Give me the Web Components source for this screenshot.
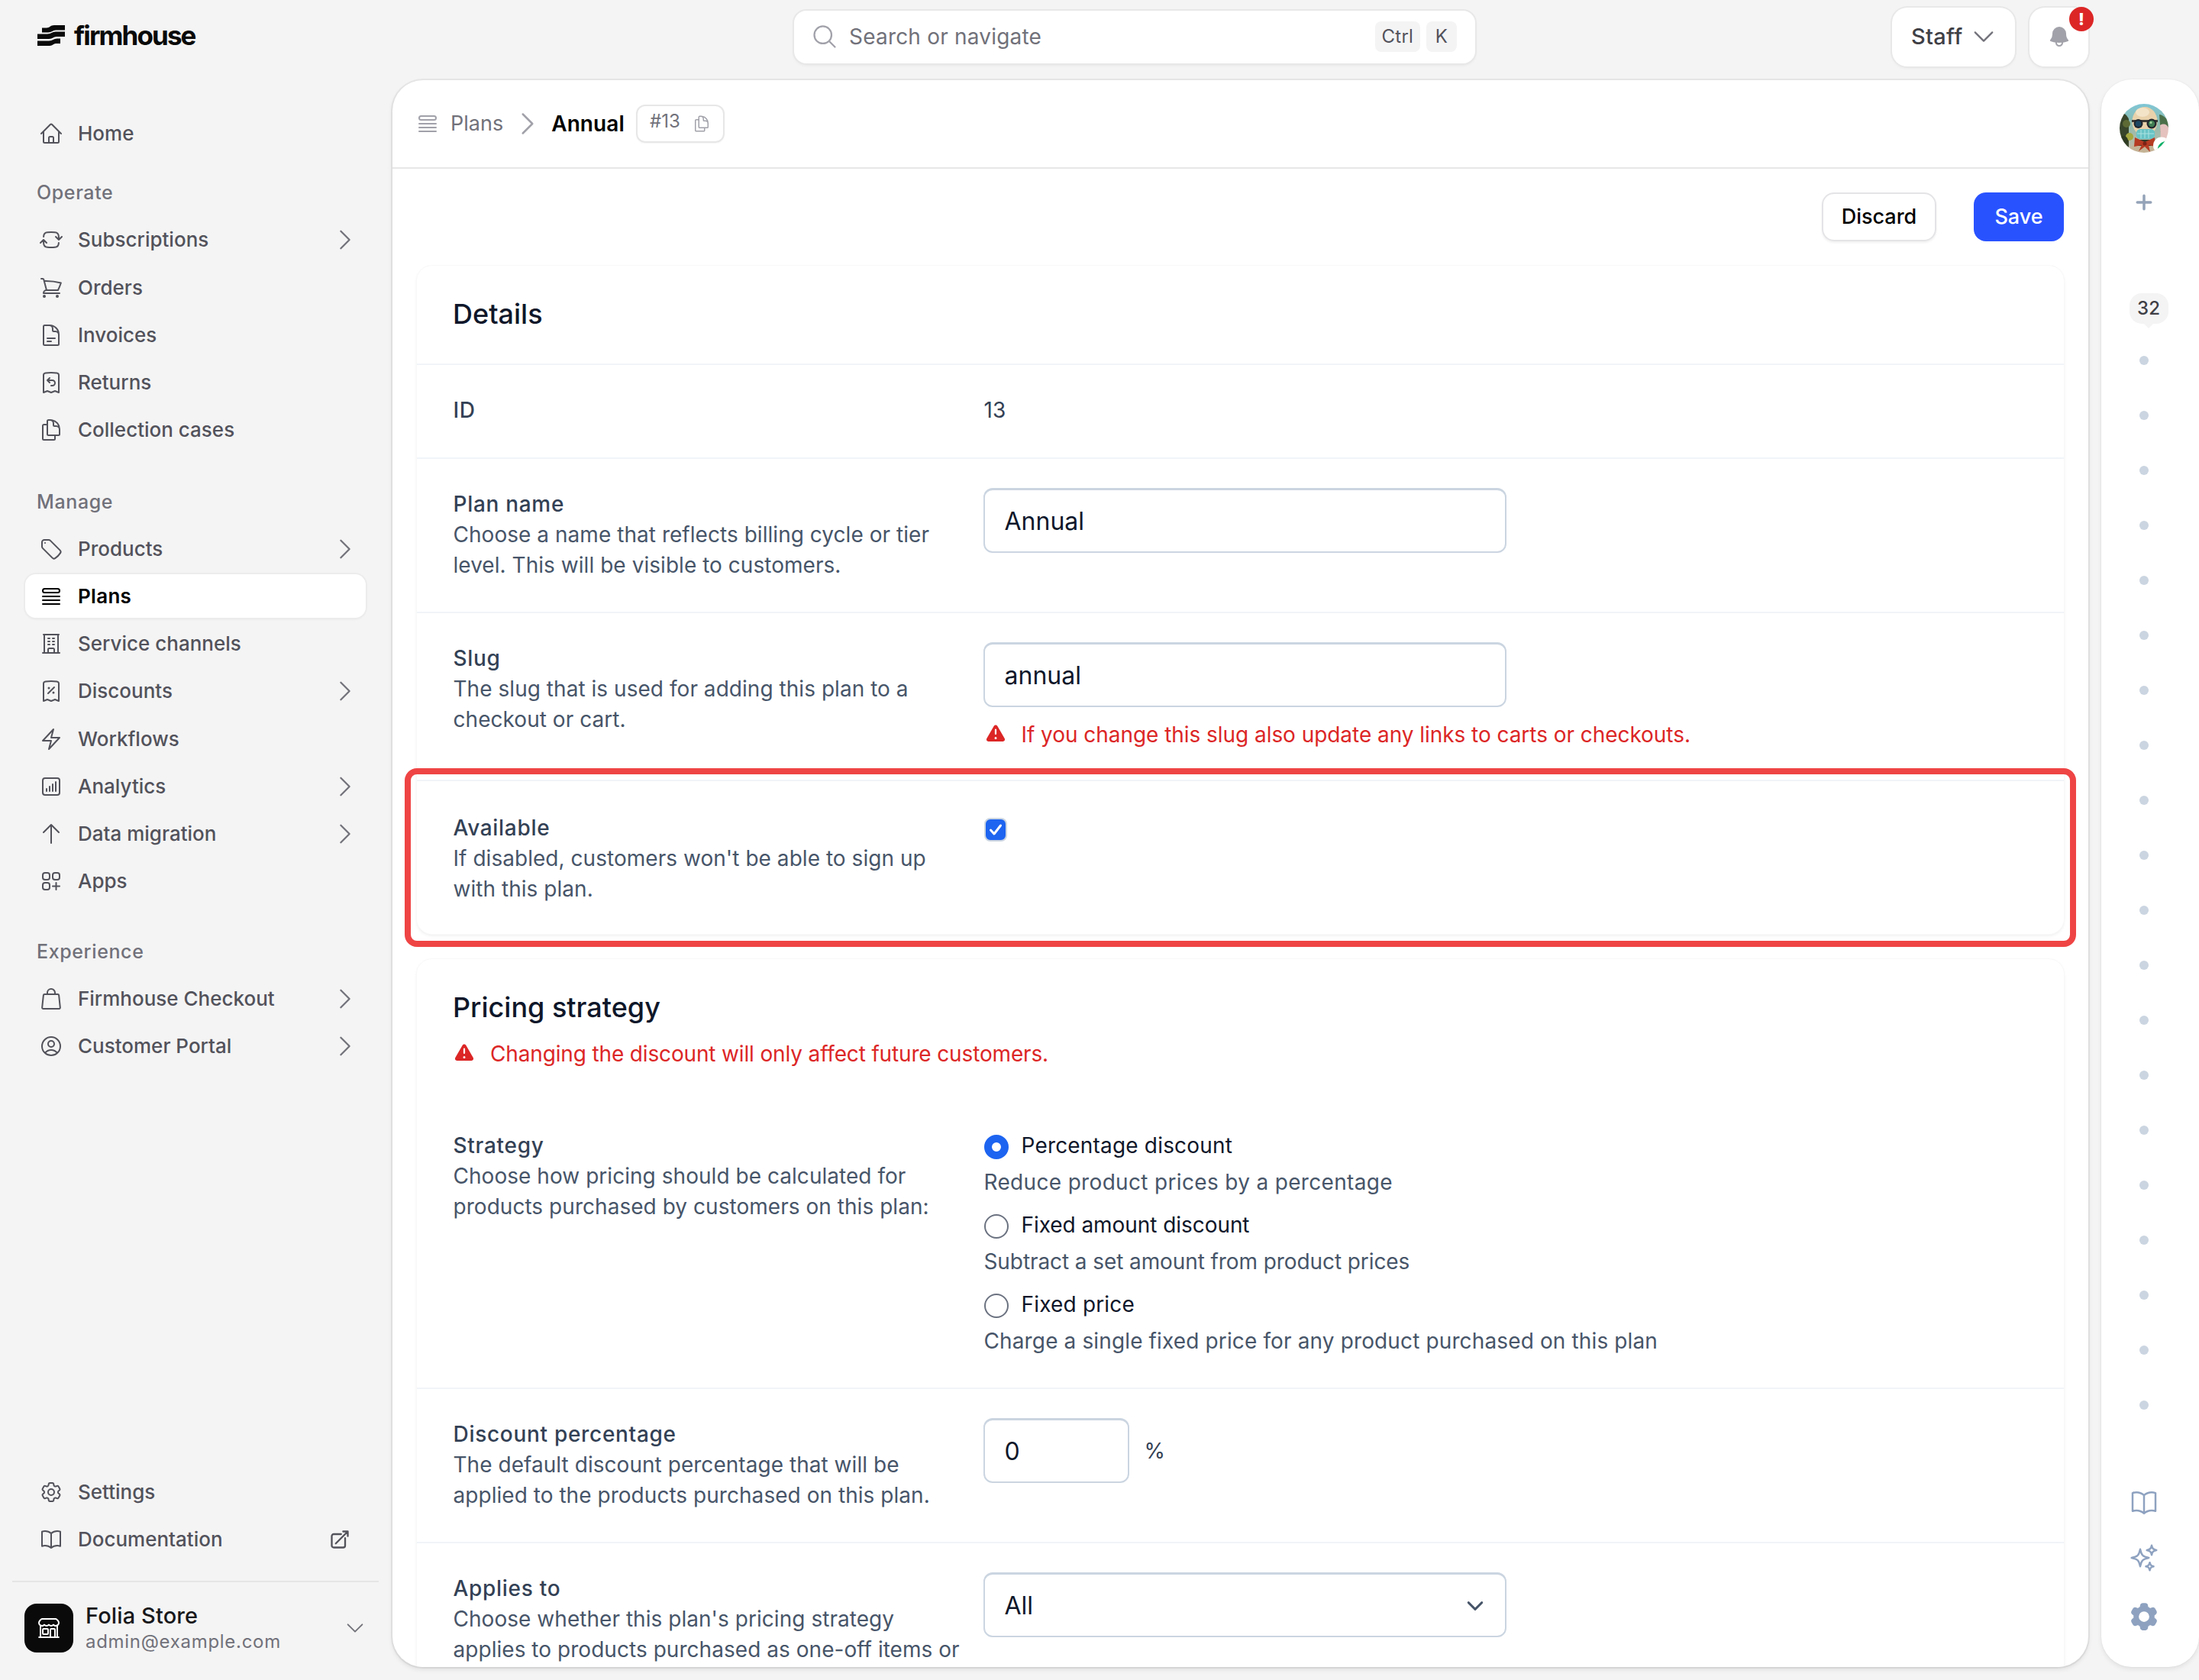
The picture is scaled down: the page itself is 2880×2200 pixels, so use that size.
<!DOCTYPE html>
<html lang="en">
<head>
<meta charset="utf-8">
<title>Firmhouse – Plans</title>
<style>
html,body{margin:0;padding:0;background:#f4f4f4;font-family:Inter,"Noto Sans","Liberation Sans",sans-serif;width:2880px;height:2200px;overflow:hidden}
</style>
</head>
<body>
<fh-app>
  <fh-sidebar slot="sidebar"></fh-sidebar>
  <fh-topbar slot="topbar"></fh-topbar>
  <fh-panel slot="panel">
    <fh-breadcrumb slot="head"></fh-breadcrumb>
    <fh-actions></fh-actions>
    <fh-card heading="Details">
      <fh-row label="ID" tight><fh-value>13</fh-value></fh-row>
      <fh-row label="Plan name" desc="Choose a name that reflects billing cycle or tier level. This will be visible to customers."><fh-input value="Annual"></fh-input></fh-row>
      <fh-row label="Slug" desc="The slug that is used for adding this plan to a checkout or cart." compact>
        <fh-input value="annual"></fh-input>
        <fh-warning style="margin-top:16px;letter-spacing:-.05px">If you change this slug also update any links to carts or checkouts.</fh-warning>
      </fh-row>
      <fh-row label="Available" desc="If disabled, customers won't be able to sign up with this plan." highlighted><fh-check></fh-check></fh-row>
    </fh-card>
    <fh-card heading="Pricing strategy" open-head style="margin-top:33px">
      <fh-warning slot="note" style="letter-spacing:-.15px">Changing the discount will only affect future customers.</fh-warning>
      <fh-row label="Strategy" desc="Choose how pricing should be calculated for products purchased by customers on this plan:" borderless>
        <fh-radio checked label="Percentage discount" sub="Reduce product prices by a percentage" style="--sub:.33px"></fh-radio>
        <fh-radio label="Fixed amount discount" sub="Subtract a set amount from product prices" style="--lab:-.06px;--sub:-.09px"></fh-radio>
        <fh-radio label="Fixed price" sub="Charge a single fixed price for any product purchased on this plan" style="--sub:.13px"></fh-radio>
      </fh-row>
      <fh-row label="Discount percentage" desc="The default discount percentage that will be applied to the products purchased on this plan."><fh-input value="0" short suffix="%"></fh-input></fh-row>
      <fh-row label="Applies to" desc="Choose whether this plan's pricing strategy applies to products purchased as one-off items or"><fh-input value="All" select></fh-input></fh-row>
    </fh-card>
  </fh-panel>
  <fh-rail slot="rail"></fh-rail>
</fh-app>
<script>
const P={
home:'M2.25 12l8.954-8.955c.44-.439 1.152-.439 1.591 0L21.75 12M4.5 9.75v10.125c0 .621.504 1.125 1.125 1.125H9.75v-4.875c0-.621.504-1.125 1.125-1.125h2.25c.621 0 1.125.504 1.125 1.125V21h4.125c.621 0 1.125-.504 1.125-1.125V9.75M8.25 21h8.25',
sync:'M19.5 12c0-1.232-.046-2.453-.138-3.662a4.006 4.006 0 00-3.7-3.7 48.678 48.678 0 00-7.324 0 4.006 4.006 0 00-3.7 3.7c-.017.22-.032.441-.046.662M19.5 12l3-3m-3 3l-3-3m-12 3c0 1.232.046 2.453.138 3.662a4.006 4.006 0 003.7 3.7 48.656 48.656 0 007.324 0 4.006 4.006 0 003.7-3.7c.017-.22.032-.441.046-.662M4.5 12l3 3m-3-3l-3 3',
cart:'M2.25 3h1.386c.51 0 .955.343 1.087.835l.383 1.437M7.5 14.25a3 3 0 00-3 3h15.75m-12.75-3h11.218c1.121-2.3 2.1-4.684 2.924-7.138a60.114 60.114 0 00-16.536-1.84M7.5 14.25L5.106 5.272M6 20.25a.75.75 0 11-1.5 0 .75.75 0 011.5 0zm12.75 0a.75.75 0 11-1.5 0 .75.75 0 011.5 0z',
doc:'M19.5 14.25v-2.625a3.375 3.375 0 00-3.375-3.375h-1.5A1.125 1.125 0 0113.5 7.125v-1.5a3.375 3.375 0 00-3.375-3.375H8.25m0 12.75h7.5m-7.5 3H12M10.5 2.25H5.625c-.621 0-1.125.504-1.125 1.125v17.25c0 .621.504 1.125 1.125 1.125h12.75c.621 0 1.125-.504 1.125-1.125V11.25a9 9 0 00-9-9z',
refund:'M8.25 9.75h4.875a2.625 2.625 0 010 5.25H12M8.25 9.75L10.5 7.5M8.25 9.75L10.5 12m9-7.243V21.75l-3.75-1.5-3.75 1.5-3.75-1.5-3.75 1.5V4.757c0-1.108.806-2.057 1.907-2.185a48.507 48.507 0 0111.186 0c1.1.128 1.907 1.077 1.907 2.185z',
dup:'M15.75 17.25v3.375c0 .621-.504 1.125-1.125 1.125h-9.75a1.125 1.125 0 01-1.125-1.125V7.875c0-.621.504-1.125 1.125-1.125H6.75a9.06 9.06 0 011.5.124m7.5 10.376h3.375c.621 0 1.125-.504 1.125-1.125V11.25c0-4.46-3.243-8.161-7.5-8.876a9.06 9.06 0 00-1.5-.124H9.375c-.621 0-1.125.504-1.125 1.125v3.5m7.5 10.375H9.375a1.125 1.125 0 01-1.125-1.125v-9.25m12 6.625v-1.875a3.375 3.375 0 00-3.375-3.375h-1.5a1.125 1.125 0 01-1.125-1.125v-1.5a3.375 3.375 0 00-3.375-3.375H9.75',
tag:'M9.568 3H5.25A2.25 2.25 0 003 5.25v4.318c0 .597.237 1.17.659 1.591l9.581 9.581c.699.699 1.78.872 2.607.33a18.095 18.095 0 005.223-5.223c.542-.827.369-1.908-.33-2.607L11.16 3.66A2.25 2.25 0 009.568 3zM6 6h.008v.008H6V6z',
queue:'M3.75 12h16.5m-16.5 3.75h16.5m-16.5 3.75h16.5M5.625 4.5h12.75a1.875 1.875 0 010 3.75H5.625a1.875 1.875 0 010-3.75z',
office:'M3.75 21h16.5M4.5 3h15M5.25 3v18m13.5-18v18M9 6.75h1.5m-1.5 3h1.5m-1.5 3h1.5m3-6H15m-1.5 3H15m-1.5 3H15M9 21v-3.375c0-.621.504-1.125 1.125-1.125h3.75c.621 0 1.125.504 1.125 1.125V21',
percent:'M9 14.25l6-6m4.5-3.493V21.75l-3.75-1.5-3.75 1.5-3.75-1.5-3.75 1.5V4.757c0-1.108.806-2.057 1.907-2.185a48.507 48.507 0 0111.186 0c1.1.128 1.907 1.077 1.907 2.185zM9.75 9h.008v.008H9.75V9zm.375 0a.375.375 0 11-.75 0 .375.375 0 01.75 0zm4.125 4.5h.008v.008h-.008V13.5zm.375 0a.375.375 0 11-.75 0 .375.375 0 01.75 0z',
bolt:'M3.75 13.5l10.5-11.25L12 10.5h8.25L9.75 21.75 12 13.5H3.75z',
chart:'M7.5 14.25v2.25m3-4.5v4.5m3-6.75v6.75m3-9v9M6 20.25h12A2.25 2.25 0 0020.25 18V6A2.25 2.25 0 0018 3.75H6A2.25 2.25 0 003.75 6v12A2.25 2.25 0 006 20.25z',
up:'M4.5 10.5L12 3m0 0l7.5 7.5M12 3v18',
apps:'M13.5 16.875h3.375m0 0h3.375m-3.375 0V13.5m0 6.75v-3.375M6 10.5h2.25a2.25 2.25 0 002.25-2.25V6a2.25 2.25 0 00-2.25-2.25H6A2.25 2.25 0 003.75 6v2.25A2.25 2.25 0 006 10.5zm0 9.75h2.25A2.25 2.25 0 0010.5 18v-2.25a2.25 2.25 0 00-2.25-2.25H6a2.25 2.25 0 00-2.25 2.25V18A2.25 2.25 0 006 20.25zm9.75-9.75H18a2.25 2.25 0 002.25-2.25V6A2.25 2.25 0 0018 3.75h-2.25A2.25 2.25 0 0013.5 6v2.25a2.25 2.25 0 002.25 2.25z',
bag:'M8.25 7.5V6a3.75 3.75 0 117.5 0v1.5m3.856 1.007l1.263 12c.07.665-.45 1.243-1.119 1.243H4.25a1.125 1.125 0 01-1.12-1.243l1.264-12A1.125 1.125 0 015.513 7.5h12.974c.576 0 1.059.435 1.119 1.007z',
user:'M17.982 18.725A7.488 7.488 0 0012 15.75a7.488 7.488 0 00-5.982 2.975m11.963 0a9 9 0 10-11.963 0m11.963 0A8.966 8.966 0 0112 21a8.966 8.966 0 01-5.982-2.275M15 9.75a3 3 0 11-6 0 3 3 0 016 0z',
cog:'M9.594 3.94c.09-.542.56-.94 1.11-.94h2.593c.55 0 1.02.398 1.11.94l.213 1.281c.063.374.313.686.645.87.074.04.147.083.22.127.324.196.72.257 1.075.124l1.217-.456a1.125 1.125 0 011.37.49l1.296 2.247a1.125 1.125 0 01-.26 1.431l-1.003.827c-.293.24-.438.613-.431.992a6.759 6.759 0 010 .255c-.007.378.138.75.43.99l1.005.828c.424.35.534.954.26 1.43l-1.298 2.247a1.125 1.125 0 01-1.369.491l-1.217-.456c-.355-.133-.75-.072-1.076.124a6.57 6.57 0 01-.22.128c-.331.183-.581.495-.644.869l-.213 1.28c-.09.543-.56.941-1.11.941h-2.594c-.55 0-1.02-.398-1.11-.94l-.213-1.281c-.062-.374-.312-.686-.644-.87a6.52 6.52 0 01-.22-.127c-.325-.196-.72-.257-1.076-.124l-1.217.456a1.125 1.125 0 01-1.369-.49l-1.297-2.247a1.125 1.125 0 01.26-1.431l1.004-.827c.292-.24.437-.613.43-.992a6.932 6.932 0 010-.255c.007-.378-.138-.75-.43-.99l-1.004-.828a1.125 1.125 0 01-.26-1.43l1.297-2.247a1.125 1.125 0 011.37-.491l1.216.456c.356.133.751.072 1.076-.124.072-.044.146-.087.22-.128.332-.183.582-.495.644-.869l.214-1.281zM15 12a3 3 0 11-6 0 3 3 0 016 0z',
book:'M12 6.042A8.967 8.967 0 006 3.75c-1.052 0-2.062.18-3 .512v14.25A8.987 8.987 0 016 18c2.305 0 4.408.867 6 2.292m0-14.25a8.966 8.966 0 016-2.292c1.052 0 2.062.18 3 .512v14.25A8.987 8.987 0 0018 18a8.967 8.967 0 00-6 2.292m0-14.25v14.25',
ext:'M13.5 6H5.25A2.25 2.25 0 003 8.25v10.5A2.25 2.25 0 005.25 21h10.5A2.25 2.25 0 0018 18.75V10.5m-10.5 6L21 3m0 0h-5.25M21 3v5.25',
right:'M8.25 4.5l7.5 7.5-7.5 7.5',
down:'M19.5 8.25l-7.5 7.5-7.5-7.5',
search:'M21 21l-5.197-5.197m0 0A7.5 7.5 0 105.196 5.196a7.5 7.5 0 0010.607 10.607z',
plus:'M12 4.5v15m7.5-7.5h-15',
store:'M13.5 21v-7.5a.75.75 0 01.75-.75h3a.75.75 0 01.75.75V21m-4.5 0H2.36m11.14 0H18m0 0h3.64m-1.39 0V9.349m-16.5 11.65V9.35m0 0a3.001 3.001 0 003.75-.615A2.993 2.993 0 009.75 9.75c.896 0 1.7-.393 2.25-1.016a2.993 2.993 0 002.25 1.016c.896 0 1.7-.393 2.25-1.016a3.001 3.001 0 003.75.614m-16.5 0a3.004 3.004 0 01-.621-4.72L4.318 3.44A1.5 1.5 0 015.378 3h13.243a1.5 1.5 0 011.06.44l1.19 1.189a3 3 0 01-.621 4.72m-13.5 8.65h3.75a.75.75 0 00.75-.75V13.5a.75.75 0 00-.75-.75H6.75a.75.75 0 00-.75.75v3.75c0 .415.336.75.75.75z',
sparkles:'M9.813 15.904L9 18.75l-.813-2.846a4.5 4.5 0 00-3.09-3.09L2.25 12l2.846-.813a4.5 4.5 0 003.09-3.09L9 5.25l.813 2.846a4.5 4.5 0 003.09 3.09L15.75 12l-2.846.813a4.5 4.5 0 00-3.09 3.09zM18.259 8.715L18 9.75l-.259-1.035a3.375 3.375 0 00-2.455-2.456L14.25 6l1.036-.259a3.375 3.375 0 002.455-2.456L18 2.25l.259 1.035a3.375 3.375 0 002.456 2.456L21.75 6l-1.035.259a3.375 3.375 0 00-2.456 2.456zM16.894 20.567L16.5 21.75l-.394-1.183a2.25 2.25 0 00-1.423-1.423L13.5 18.75l1.183-.394a2.25 2.25 0 001.423-1.423l.394-1.183.394 1.183a2.25 2.25 0 001.423 1.423l1.183.394-1.183.394a2.25 2.25 0 00-1.423 1.423z'
};
const SOLID={
bell:['0 0 24 24','M5.25 9a6.75 6.75 0 0113.5 0v.75c0 2.123.8 4.057 2.118 5.52a.75.75 0 01-.297 1.206c-1.544.57-3.16.99-4.831 1.243a3.75 3.75 0 11-7.48 0 24.585 24.585 0 01-4.831-1.244.75.75 0 01-.298-1.205A8.217 8.217 0 005.25 9.75V9zm4.502 8.9a2.25 2.25 0 104.496 0 25.057 25.057 0 01-4.496 0z'],
warn:['0 0 20 20','M8.485 2.495c.673-1.167 2.357-1.167 3.03 0l6.28 10.875c.673 1.167-.17 2.625-1.516 2.625H3.72c-1.347 0-2.189-1.458-1.515-2.625L8.485 2.495zM10 5a.75.75 0 01.75.75v3.5a.75.75 0 01-1.5 0v-3.5A.75.75 0 0110 5zm0 9a1 1 0 100-2 1 1 0 000 2z'],
gear:['0 0 24 24','M11.078 2.25c-.917 0-1.699.663-1.85 1.567L9.05 4.889c-.02.12-.115.26-.297.348a7.493 7.493 0 00-.986.57c-.166.115-.334.126-.45.083L6.3 5.508a1.875 1.875 0 00-2.282.819l-.922 1.597a1.875 1.875 0 00.432 2.385l.84.692c.095.078.17.229.154.43a7.598 7.598 0 000 1.139c.015.2-.059.352-.153.43l-.841.692a1.875 1.875 0 00-.432 2.385l.922 1.597a1.875 1.875 0 002.282.818l1.019-.382c.115-.043.283-.031.45.082.312.214.641.405.985.57.182.088.277.228.297.35l.178 1.071c.151.904.933 1.567 1.85 1.567h1.844c.916 0 1.699-.663 1.85-1.567l.178-1.072c.02-.12.114-.26.297-.349.344-.165.673-.356.985-.57.167-.114.335-.125.45-.082l1.02.382a1.875 1.875 0 002.28-.819l.923-1.597a1.875 1.875 0 00-.432-2.385l-.84-.692c-.095-.078-.17-.229-.154-.43a7.614 7.614 0 000-1.139c-.016-.2.059-.352.153-.43l.84-.692c.708-.582.891-1.59.433-2.385l-.922-1.597a1.875 1.875 0 00-2.282-.818l-1.02.382c-.114.043-.282.031-.449-.083a7.49 7.49 0 00-.985-.57c-.183-.087-.277-.227-.297-.348l-.179-1.072a1.875 1.875 0 00-1.85-1.567h-1.843zM12 15.75a3.75 3.75 0 100-7.5 3.75 3.75 0 000 7.5z']
};
function def(name,css,html,setup){
  customElements.define(name,class extends HTMLElement{
    connectedCallback(){
      if(this.shadowRoot)return;
      const r=this.attachShadow({mode:'open'});
      const body=typeof html==='function'?html(this):html;
      r.innerHTML='<style>'+css+'</style>'+body;
      if(setup)setup(this,r);
    }
  });
}
def('fh-icon',':host{display:inline-flex;flex:none;width:var(--s,32px);height:var(--s,32px);color:var(--c,currentColor)}svg{width:100%;height:100%;display:block}',el=>{
  const n=el.getAttribute('name');
  if(SOLID[n])return `<svg viewBox="${SOLID[n][0]}" fill="currentColor"><path fill-rule="evenodd" clip-rule="evenodd" d="${SOLID[n][1]}"/></svg>`;
  const w=el.getAttribute('sw')||'1.5';
  return `<svg viewBox="0 0 24 24" fill="none" stroke="currentColor" stroke-width="${w}" stroke-linecap="round" stroke-linejoin="round"><path d="${P[n]}"/></svg>`;
});
def('fh-app',`:host{display:grid;width:2880px;height:2200px;grid-template-columns:514px 2221px 145px;grid-template-rows:105px 2078px}
::slotted([slot=sidebar]){grid-row:1/3;grid-column:1}
::slotted([slot=topbar]){grid-row:1;grid-column:2/4}
::slotted([slot=panel]){grid-row:2;grid-column:2}
::slotted([slot=rail]){grid-row:2;grid-column:3}`,
'<slot name="sidebar"></slot><slot name="topbar"></slot><slot name="panel"></slot><slot name="rail"></slot>');
def('fh-logo',`:host{display:flex;gap:12px;height:144px;padding:0 0 24px 49px;box-sizing:border-box;color:#0a0a0a;align-items:flex-start}
svg{width:36px;height:27px;margin-top:33px;display:block}
span{font:700 35px/1 Inter,sans-serif;letter-spacing:-1.9px;margin-top:29px}`,
`<svg viewBox="0 0 36 27" fill="currentColor"><path d="M6 3.500h6c4 0 5-3.500 10-3.500h14v6.500H24c-4 0-5 3-10 3H6z"/><path d="M0 11.500h13c5 0 6-3 11-3h12V15H25c-4 0-5 3-10 3H0z"/><path d="M0 20.500h15c5 0 6-3 11-3h4V24h-6c-3 0-4 3-8 3H0z"/></svg><span>firmhouse</span>`);
def('fh-nav-label',':host{display:block;color:#71717a;font:500 25px/40px Inter,sans-serif;letter-spacing:.62px;padding-left:48px;margin:var(--mt,26px) 0 11px}','<slot></slot>');
def('fh-nav-item',`:host{display:block;height:62.25px;padding:2.6px 0;box-sizing:border-box;margin:0 35px 0 33px}
.r{display:flex;align-items:center;height:100%;padding:0 9px 0 18px;border-radius:14px;color:#52525b;font:500 26px/40px Inter,sans-serif;letter-spacing:0}
:host([active]) .r{background:#fff;color:#000;font-weight:600;box-shadow:0 0 0 2px #ececec,0 2px 3px rgba(0,0,0,.06);letter-spacing:.3px}
.t{flex:1;margin-left:19px;white-space:nowrap}
.ch{--s:36px;--c:#71717a}
.ex{--s:28px;margin-right:11px;--c:#52525b}`,
el=>`<div class="r"><fh-icon name="${el.getAttribute('icon')}"></fh-icon><span class="t"><slot></slot></span>${el.hasAttribute('more')?'<fh-icon class="ch" name="right"></fh-icon>':''}${el.hasAttribute('ext')?'<fh-icon class="ex" sw="2" name="ext"></fh-icon>':''}</div>`);
def('fh-store',`:host{display:flex;align-items:center;height:64px;margin:28px 0 0 32px;padding-right:26px}
.b{width:64px;height:64px;border-radius:16px;background:#0a0a0a;color:#fff;display:flex;align-items:center;justify-content:center;--s:32px;flex:none}
.t{margin-left:16px;flex:1;margin-top:1px}
.n{font:500 29px/34px Inter,sans-serif;color:#18181b;letter-spacing:.12px}
.m{font:400 24px/34px Inter,sans-serif;color:#71717a;letter-spacing:.7px}
.ch{--s:30px;--c:#71717a;margin-right:8px}`,
`<div class="b"><fh-icon name="store"></fh-icon></div><div class="t"><div class="n">Folia Store</div><div class="m">admin@example.com</div></div><fh-icon class="ch" name="down"></fh-icon>`);
def('fh-sidebar',`:host{display:flex;flex-direction:column;height:2200px;box-sizing:border-box}
.sp{flex:1}.div{height:2px;background:#e5e5e5;margin:23px 18px 0 16px}
.l2{--mt:42px}.l3{--mt:40.5px}`,
`<fh-logo></fh-logo>
<fh-nav-item icon="home">Home</fh-nav-item>
<fh-nav-label>Operate</fh-nav-label>
<fh-nav-item icon="sync" more>Subscriptions</fh-nav-item>
<fh-nav-item icon="cart">Orders</fh-nav-item>
<fh-nav-item icon="doc">Invoices</fh-nav-item>
<fh-nav-item icon="refund">Returns</fh-nav-item>
<fh-nav-item icon="dup">Collection cases</fh-nav-item>
<fh-nav-label class="l2">Manage</fh-nav-label>
<fh-nav-item icon="tag" more>Products</fh-nav-item>
<fh-nav-item icon="queue" active>Plans</fh-nav-item>
<fh-nav-item icon="office">Service channels</fh-nav-item>
<fh-nav-item icon="percent" more>Discounts</fh-nav-item>
<fh-nav-item icon="bolt">Workflows</fh-nav-item>
<fh-nav-item icon="chart" more>Analytics</fh-nav-item>
<fh-nav-item icon="up" more>Data migration</fh-nav-item>
<fh-nav-item icon="apps">Apps</fh-nav-item>
<fh-nav-label class="l3">Experience</fh-nav-label>
<fh-nav-item icon="bag" more>Firmhouse Checkout</fh-nav-item>
<fh-nav-item icon="user" more>Customer Portal</fh-nav-item>
<div class="sp"></div>
<fh-nav-item icon="cog">Settings</fh-nav-item>
<fh-nav-item icon="book" ext>Documentation</fh-nav-item>
<div class="div"></div>
<fh-store></fh-store>
<div style="height:36px"></div>`);
def('fh-topbar',`:host{display:flex;align-items:center;height:96px;padding:0 145px 0 526px;box-sizing:border-box;align-self:start}
.s{display:flex;align-items:center;width:892px;height:69px;box-sizing:border-box;background:#fff;border-radius:16px;padding:0 24px 0 22px;box-shadow:0 0 0 2px #e8e8e8,0 2px 4px rgba(0,0,0,.08);color:#71717a;font:400 28px/40px Inter,sans-serif;letter-spacing:.2px}
.s fh-icon{--s:36px;--c:#a1a1aa;margin-right:14px}
.s span{flex:1}
kbd{font:400 24px/40px Inter,sans-serif;color:#52525b;background:#f4f4f5;border-radius:8px;height:40px;padding:0 9px;margin-left:8px;min-width:22px;text-align:center}
.b{background:#fff;border-radius:20px;height:77px;box-sizing:border-box;box-shadow:0 0 0 2px #e8e8e8,0 2px 4px rgba(0,0,0,.06);display:flex;align-items:center}
.st{margin-left:auto;width:161px;padding-left:25px;color:#3f3f46;font:500 29px/40px Inter,sans-serif;letter-spacing:.3px}
.st fh-icon{--s:36px;--c:#71717a;margin-left:9px}
.be{position:relative;width:77px;margin-left:19px;justify-content:center;--s:32px;--c:#a1a1aa}
.bd{position:absolute;left:52px;top:-1px;width:32px;height:32px;border-radius:50%;background:#dc2626;color:#fff;font:800 22px/32px Inter,sans-serif;text-align:center}`,
`<div class="s"><fh-icon name="search"></fh-icon><span>Search or navigate</span><kbd>Ctrl</kbd><kbd>K</kbd></div>
<div class="b st">Staff<fh-icon name="down"></fh-icon></div>
<div class="b be"><fh-icon name="bell"></fh-icon><div class="bd">!</div></div>`);
def('fh-panel',`:host{display:flex;flex-direction:column;background:#fff;border-radius:40px;overflow:hidden;box-shadow:0 0 0 2px rgba(0,0,0,.05),0 3px 6px rgba(0,0,0,.1);position:relative}
.h{height:114px;border-bottom:2px solid #e7e7e7;flex:none;display:flex;align-items:center;padding-left:30px}
.c{padding:0 32px;flex:1;min-height:0;overflow:hidden}`,
`<div class="h"><slot name="head"></slot></div><div class="c"><slot></slot></div>`);
def('fh-breadcrumb',`:host{display:flex;align-items:center;font:400 28px/40px Inter,sans-serif;color:#71717a}
.i{--s:32px;--c:#a1a1aa;margin-right:14px}
.pl{font-size:27px}
.ch{--s:40px;--c:#a1a1aa;margin:0 11px 0 12px}
b{font-weight:600;color:#000;letter-spacing:.1px}
.p{display:flex;align-items:center;height:50px;margin-left:15px;padding:0 18px;box-sizing:border-box;border-radius:12px;box-shadow:inset 0 0 0 2px #e7e7e7,0 1px 2px rgba(0,0,0,.04);font-size:24px;color:#71717a;line-height:40px}
.p span{margin-top:-6px}.p fh-icon{--s:24px;--c:#a1a1aa;margin-left:16px;}`,
`<fh-icon class="i" name="queue"></fh-icon><span class="pl">Plans</span><fh-icon class="ch" name="right"></fh-icon><b>Annual</b><div class="p"><span>#13</span><fh-icon name="dup"></fh-icon></div>`);
def('fh-actions',`:host{display:flex;justify-content:flex-end;align-items:center;gap:49px;padding:31px 0 32px}
button{font:500 27px/40px Inter,sans-serif;height:64px;border-radius:16px;border:0;padding:0;cursor:pointer}
.d{width:150px;background:#fff;color:#000;box-shadow:inset 0 0 0 2px #e4e4e7,0 2px 3px rgba(0,0,0,.06)}
.s{width:118px;background:#2952ff;color:#fff}`,
`<button class="d">Discard</button><button class="s">Save</button>`);
def('fh-card',`:host{display:block;background:#fff;border-radius:20px;box-shadow:0 0 0 1px #f8f8f8,0 2px 4px rgba(0,0,0,.08);position:relative}
h2{margin:0;font:500 36px/46px Inter,sans-serif;color:#0f172a;padding:40px 47px 0}
.hd{height:88px}
.note{padding:18px 47px 80px}`,
el=>el.hasAttribute('open-head')
 ?`<h2>${el.getAttribute('heading')}</h2><div class="note"><slot name="note"></slot></div><slot></slot>`
 :`<h2 class="hd">${el.getAttribute('heading')}</h2><slot></slot>`);
def('fh-row',`:host{display:grid;grid-template-columns:670px 1fr;column-gap:25px;padding:39px 47px 41px 47.5px;border-top:2px solid #f1f5f9;font:400 28px/40px Inter,sans-serif;position:relative;letter-spacing:.04px}
:host([tight]){padding-bottom:42px}
:host([compact]){padding:39px 47px 39px 47.5px}
:host([borderless]){border-top:0;padding:0 47px 41px 47.5px}
:host([highlighted]){padding:41px 47px 39px 47.5px;border-radius:0 0 20px 20px}
:host([highlighted])::after{content:"";position:absolute;inset:-17px -16px -17px;border:8px solid #ef4444;border-radius:16px;pointer-events:none}
.l{color:#334155;font-weight:500;letter-spacing:.7px}.d{color:#475569}`,
el=>`<div><div class="l">${el.getAttribute('label')}</div>${el.getAttribute('desc')?`<div class="d">${el.getAttribute('desc')}</div>`:''}</div><div class="ctl"><slot></slot></div>`);
def('fh-value',':host{display:block;color:#334155;font:400 28px/40px Inter,sans-serif}','<slot></slot>');
def('fh-input',`:host{display:flex;align-items:center;margin-top:-1px;margin-left:-1px;font:400 32px/40px Inter,sans-serif;color:#0f172a}
.b{display:flex;align-items:center;width:685px;height:85px;box-sizing:border-box;padding:2px 26px 0 26px;border:2px solid #cbd5e1;border-top-width:3px;border-radius:12px;background:#fff;letter-spacing:0}
:host([short]) .b{width:191px}
.v{flex:1}.ch{--s:28px;--c:#475569;margin-right:-1px}
.suf{margin-left:20px;font-size:28px;color:#334155}`,
el=>`<div class="b"><span class="v">${el.getAttribute('value')}</span>${el.hasAttribute('select')?'<fh-icon class="ch" sw="2.5" name="down"></fh-icon>':''}</div>${el.getAttribute('suffix')?`<span class="suf">${el.getAttribute('suffix')}</span>`:''}`);
def('fh-warning',`:host{display:flex;align-items:center;color:#dc2626;font:400 28px/40px Inter,sans-serif}
fh-icon{--s:30px;margin-right:19px}`,
`<fh-icon name="warn"></fh-icon><span><slot></slot></span>`);
def('fh-check',`:host{display:block;width:30px;height:31px;margin-top:7px;margin-left:0}
svg{display:block;width:100%;height:100%}`,
`<svg viewBox="0 0 30 31"><rect x="1" y="1" width="28" height="29" rx="7" fill="#1d64f0" stroke="#cbd5e1" stroke-width="2"/><path d="M8.500 16l4.500 5 8.500-11" fill="none" stroke="#fff" stroke-width="3" stroke-linecap="round" stroke-linejoin="round"/></svg>`);
def('fh-radio',`:host{display:block;margin-bottom:16px}
:host(:last-of-type){margin-bottom:0}
.t{display:flex;height:40px;color:#0f172a;font:400 28px/40px Inter,sans-serif;letter-spacing:var(--lab,.18px)}
.c{width:32px;height:32px;box-sizing:border-box;border-radius:50%;border:2.500px solid #6b7280;margin:6px 17px 0 0;background:#fff;flex:none}
:host([checked]) .c{border:10.500px solid #1d64f0}
.s{color:#475569;margin-top:8px;font:400 28px/40px Inter,sans-serif;letter-spacing:var(--sub,.18px)}`,
el=>`<div class="t"><div class="c"></div><span>${el.getAttribute('label')}</span></div><div class="s">${el.getAttribute('sub')}</div>`);
def('fh-avatar',`:host{display:block;width:64px;height:64px;position:relative}
svg{display:block;width:100%;height:100%}`,
`<svg viewBox="0 0 64 64">
<defs><clipPath id="c"><circle cx="32" cy="32" r="32"/></clipPath><linearGradient id="g" x1="0" y1="0" x2="0" y2="1"><stop offset="0" stop-color="#7fc6d6"/><stop offset=".4" stop-color="#8dbcb0"/><stop offset="1" stop-color="#c9b9a3"/></linearGradient><filter id="b"><feGaussianBlur stdDeviation=".5"/></filter></defs>
<g clip-path="url(#c)">
<g filter="url(#b)">
<rect width="64" height="64" fill="url(#g)"/>
<path d="M0 14c6-3 9 0 12 6v44H0z" fill="#39452a"/>
<circle cx="9" cy="26" r="5" fill="#5d6b35"/><circle cx="13" cy="43" r="5" fill="#a5a83f"/><circle cx="5" cy="48" r="6" fill="#2e3a22"/>
<path d="M52 14c4 0 12 6 12 12v14H54z" fill="#4c6f4a"/><path d="M53 28c5-3 9-1 11 3v18H54z" fill="#e5c2be"/>
<path d="M12 64c2-10 10-14 21-14s18 4 21 14z" fill="#c4b396"/>
<path d="M24 47h18v8H24z" fill="#2f3a2a"/>
<ellipse cx="33" cy="23" rx="16.500" ry="19" fill="#e9d2ab"/>
<ellipse cx="30" cy="11" rx="9" ry="6" fill="#f3e4c8"/>
<rect x="16" y="21" width="34" height="3" fill="#3b3a36"/>
<circle cx="24.500" cy="26" r="6" fill="#20282e"/><circle cx="24.500" cy="26" r="3.800" fill="#1f4763"/>
<circle cx="42" cy="26" r="6.500" fill="#20282e"/><circle cx="42" cy="26" r="4.200" fill="#3f7d52"/><circle cx="41" cy="24.500" r="1.500" fill="#a8d8a2"/>
<rect x="22" y="33" width="24" height="13" rx="5" fill="#68c4c6"/><path d="M23 39h22M28 34v11M33 34v11M38 34v11" stroke="#aee3e2" stroke-width="1"/>
<path d="M33 50l-13-6-1 12 10-2-4 8 8-6 7 7-2-9 9 2-1-12z" fill="#b53a22"/><circle cx="33" cy="52" r="2.500" fill="#7c2012"/>
</g>
<circle cx="55" cy="54.500" r="11" fill="#fff"/>
<path d="M50 62c-1-6 2-11 9-13 1 6-1 12-9 13z" fill="#10b068"/>
</g></svg>`);
def('fh-rail',`:host{display:flex;flex-direction:column;align-items:center;background:#fff;border-radius:40px;margin-left:17px;margin-top:-1px;padding:32px 16px 44px 0;box-sizing:border-box;box-shadow:0 3px 6px rgba(0,0,0,.08),0 0 0 1px rgba(0,0,0,.02);height:2079px}
.pl{--s:28px;--c:#94a3b8;margin-top:51px}
.pill{margin-top:105px;margin-left:12px;width:51px;height:40px;border-radius:16px;background:#f4f4f5;color:#3f3f46;font:500 24px/40px Inter,sans-serif;text-align:center;position:relative}
.pill::after{content:"";position:absolute;left:50%;bottom:-4px;width:10px;height:10px;margin-left:-5px;background:#f4f4f5;transform:rotate(45deg)}
.dots{display:flex;flex-direction:column;gap:60px;margin-top:42px}
.dots i{display:block;width:12px;height:12px;border-radius:50%;background:#cbd5e1}
.sp{flex:1}
.bk,.sk,.gr{--c:#8ea2c0}
.bk{--s:40px}.sk{--s:40px;margin-top:32px}.gr{--s:44px;margin-top:35px}`,
`<fh-avatar></fh-avatar><fh-icon class="pl" sw="3" name="plus"></fh-icon><div class="pill">32</div>
<div class="dots">${'<i></i>'.repeat(20)}</div><div class="sp"></div>
<fh-icon class="bk" name="book"></fh-icon><fh-icon class="sk" name="sparkles"></fh-icon><fh-icon class="gr" name="gear"></fh-icon>`);
</script>
</body>
</html>
